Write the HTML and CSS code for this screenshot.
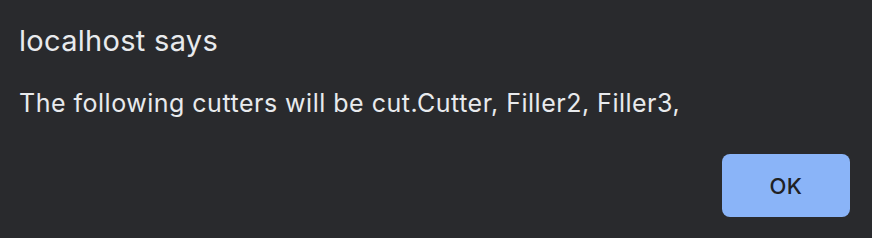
FILE: index.html
```html
<!DOCTYPE html>
<html>

<head>
    <meta charset="UTF-8">
    <title>localhost says</title>
    <link rel="stylesheet" href="styles.css">
</head>

<body>
    <div class="dialog">
        <div class="title">localhost says</div>
        <div class="message">The following cutters will be cut.Cutter, Filler2, Filler3,</div>
        <div class="actions">
            <button class="okBtn" type="button">OK</button>
        </div>
    </div>
</body>

</html>
```

FILE: styles.css
```css
html,
body {
    margin: 0;
    height: 100%;
    background-color: #292a2d;
}

.dialog {
    box-sizing: border-box;
    height: 238px;
    padding: 25px 22px 21px 19px;
    font-family: Inter, "Noto Sans", sans-serif;
    color: #e8eaed;
    display: flex;
    flex-direction: column;
}

.title {
    font-size: 29px;
    line-height: 32px;
    letter-spacing: 0.3px;
}

.message {
    margin-top: 32px;
    font-size: 25px;
    line-height: 28px;
    letter-spacing: 0.5px;
}

.actions {
    margin-top: auto;
    display: flex;
    justify-content: flex-end;
}

.okBtn {
    width: 128px;
    height: 63px;
    border: none;
    border-radius: 8px;
    background-color: #8ab4f8;
    color: #202124;
    font-family: Inter, "Noto Sans", sans-serif;
    font-size: 22px;
    font-weight: 500;
    letter-spacing: 0.5px;
}
```
